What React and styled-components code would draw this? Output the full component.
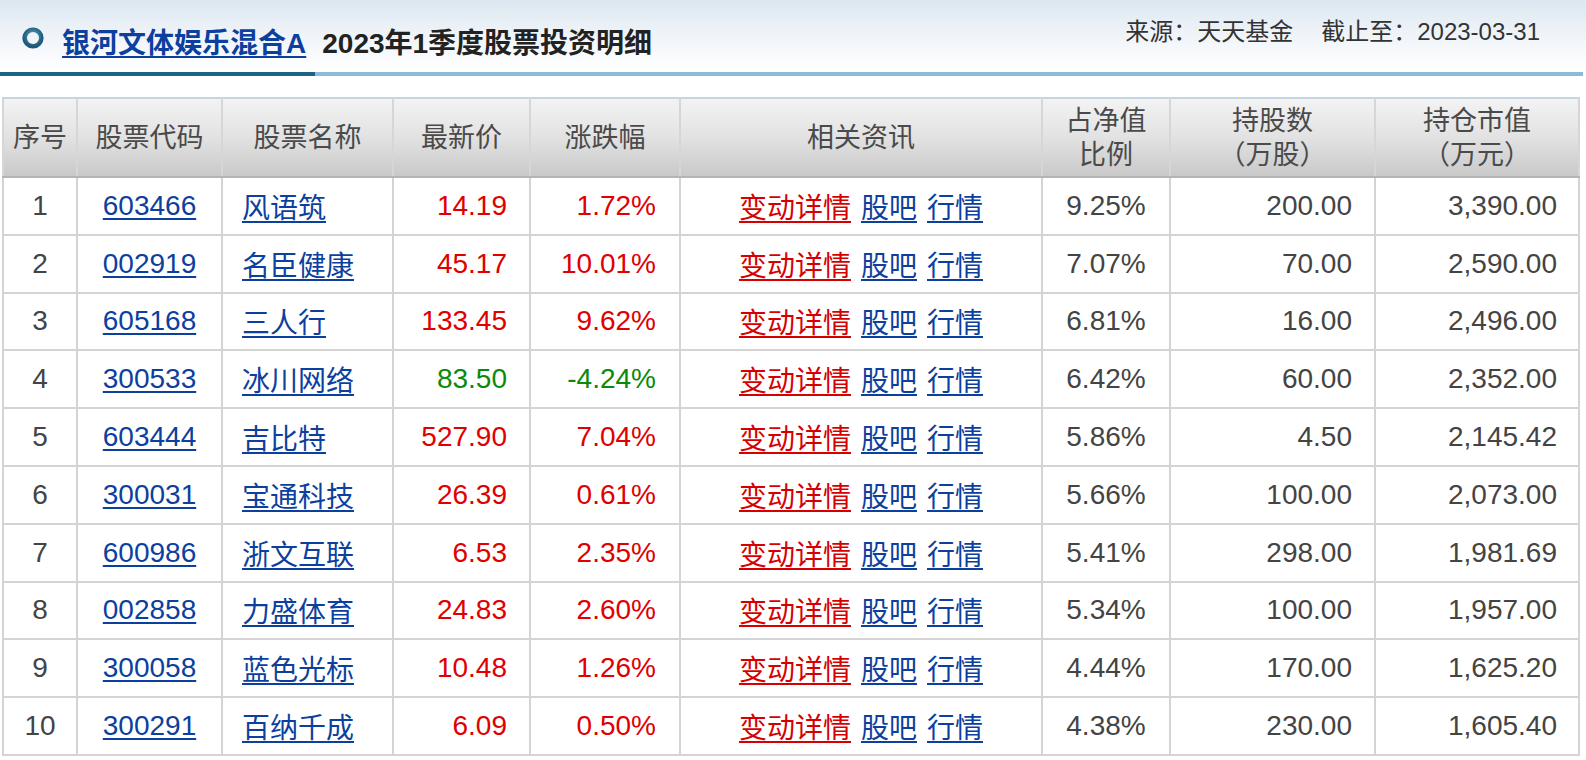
import React from "react";
import styled, { createGlobalStyle } from "styled-components";

const GlobalStyle = createGlobalStyle`
  html, body {
    margin: 0;
    padding: 0;
    background: #fff;
    font-family: "Liberation Sans", "Noto Sans CJK SC", sans-serif;
  }
`;

const rows = [
  { no: 1, code: "603466", name: "风语筑", price: "14.19", change: "1.72%", ratio: "9.25%", shares: "200.00", value: "3,390.00" },
  { no: 2, code: "002919", name: "名臣健康", price: "45.17", change: "10.01%", ratio: "7.07%", shares: "70.00", value: "2,590.00" },
  { no: 3, code: "605168", name: "三人行", price: "133.45", change: "9.62%", ratio: "6.81%", shares: "16.00", value: "2,496.00" },
  { no: 4, code: "300533", name: "冰川网络", price: "83.50", change: "-4.24%", ratio: "6.42%", shares: "60.00", value: "2,352.00", down: true },
  { no: 5, code: "603444", name: "吉比特", price: "527.90", change: "7.04%", ratio: "5.86%", shares: "4.50", value: "2,145.42" },
  { no: 6, code: "300031", name: "宝通科技", price: "26.39", change: "0.61%", ratio: "5.66%", shares: "100.00", value: "2,073.00" },
  { no: 7, code: "600986", name: "浙文互联", price: "6.53", change: "2.35%", ratio: "5.41%", shares: "298.00", value: "1,981.69" },
  { no: 8, code: "002858", name: "力盛体育", price: "24.83", change: "2.60%", ratio: "5.34%", shares: "100.00", value: "1,957.00" },
  { no: 9, code: "300058", name: "蓝色光标", price: "10.48", change: "1.26%", ratio: "4.44%", shares: "170.00", value: "1,625.20" },
  { no: 10, code: "300291", name: "百纳千成", price: "6.09", change: "0.50%", ratio: "4.38%", shares: "230.00", value: "1,605.40" },
];

const columns = [74, 145, 171, 137, 150, 362, 128, 205, 204];

function RingIcon() {
  return (
    <svg width="22" height="22" viewBox="0 0 22 22">
      <defs>
        <radialGradient id="ring" cx="50%" cy="40%" r="60%">
          <stop offset="0%" stopColor="#6aa6c8" />
          <stop offset="100%" stopColor="#1b5a7a" />
        </radialGradient>
      </defs>
      <circle cx="11" cy="11" r="8.3" fill="none" stroke="url(#ring)" strokeWidth="4.6" />
    </svg>
  );
}

export default function App() {
  return (
    <>
      <GlobalStyle />
      <Page>
        <TitleBar>
          <TitleLeft>
            <RingIcon />
            <FundLink href="#">银河文体娱乐混合A</FundLink>
            <TitleText>2023年1季度股票投资明细</TitleText>
          </TitleLeft>
          <Source>
            <span>来源：天天基金</span>
            <span>截止至：2023-03-31</span>
          </Source>
        </TitleBar>
        <Rule />
        <Table>
          <colgroup>
            {columns.map((w, i) => (
              <col key={i} style={{ width: w }} />
            ))}
          </colgroup>
          <thead>
            <tr>
              <Th>序号</Th>
              <Th>股票代码</Th>
              <Th>股票名称</Th>
              <Th>最新价</Th>
              <Th>涨跌幅</Th>
              <Th>相关资讯</Th>
              <Th>占净值<br />比例</Th>
              <Th>持股数<br />（万股）</Th>
              <Th>持仓市值<br />（万元）</Th>
            </tr>
          </thead>
          <tbody>
            {rows.map((r) => (
              <tr key={r.no}>
                <Td $align="center">{r.no}</Td>
                <Td $align="center"><Link href="#">{r.code}</Link></Td>
                <Td $align="left" $pad="19px"><Link href="#" $flush>{r.name}</Link></Td>
                <Td $align="right" $pad="22px" $color={r.down ? "#0a8a0a" : "#e00000"}>{r.price}</Td>
                <Td $align="right" $pad="23px" $color={r.down ? "#0a8a0a" : "#e00000"}>{r.change}</Td>
                <Td $align="center">
                  <Link href="#" $red>变动详情</Link>
                  <Link href="#">股吧</Link>
                  <Link href="#">行情</Link>
                </Td>
                <Td $align="center">{r.ratio}</Td>
                <Td $align="right" $pad="22px">{r.shares}</Td>
                <Td $align="right" $pad="21px">{r.value}</Td>
              </tr>
            ))}
          </tbody>
        </Table>
      </Page>
    </>
  );
}

const Page = styled.div`
  width: 1586px;
  min-height: 760px;
`;

const TitleBar = styled.div`
  height: 72px;
  display: flex;
  justify-content: space-between;
  align-items: flex-start;
  background: linear-gradient(to bottom, #dce7f1 0%, #eef3f8 45%, #fbfcfe 85%, #ffffff 100%);
  padding-right: 46px;
`;

const TitleLeft = styled.div`
  display: flex;
  align-items: center;
  padding-left: 22px;
  height: 82px;

  svg {
    margin-right: 18px;
    margin-top: -6px;
  }
`;

const FundLink = styled.a`
  font-size: 28px;
  font-weight: bold;
  color: #0c3f9e;
  text-decoration: underline;
  text-underline-offset: 3px;
  margin-right: 16px;
`;

const TitleText = styled.span`
  font-size: 28px;
  font-weight: bold;
  color: #222;
`;

const Source = styled.div`
  display: flex;
  gap: 28px;
  font-size: 24px;
  color: #333;
  padding-top: 12px;
`;

const Rule = styled.div`
  height: 4px;
  width: 1583px;
  background: linear-gradient(to right, #1c6486 0, #1c6486 315px, #8dbad8 315px, #8dbad8 100%);
`;

const Table = styled.table`
  margin: 21px 0 0 2px;
  width: 1576px;
  table-layout: fixed;
  border-collapse: collapse;
  font-size: 28px;
  color: #444;
`;

const Th = styled.th`
  height: 77px;
  padding: 0;
  font-size: 27px;
  font-weight: normal;
  color: #4a4a4a;
  line-height: 34px;
  text-align: center;
  background: linear-gradient(to bottom, #f3f3f3 0%, #e2e2e2 50%, #c9c9c9 100%);
  border: 2px solid #d6d6d6;
  border-top-color: #c3d6e4;
  border-bottom-color: #b5b5b5;
`;

const Td = styled.td`
  height: 55.8px;
  padding: 0 ${(p) => p.$pad || "0"};
  text-align: ${(p) => p.$align};
  color: ${(p) => p.$color || "#444"};
  border: 2px solid #d4d4d4;
  white-space: nowrap;
`;

const Link = styled.a`
  color: ${(p) => (p.$red ? "#d60000" : "#0c3f9e")};
  text-decoration: underline;
  text-underline-offset: 3px;
  margin: 0 ${(p) => (p.$flush ? "0" : "5px")};
`;
